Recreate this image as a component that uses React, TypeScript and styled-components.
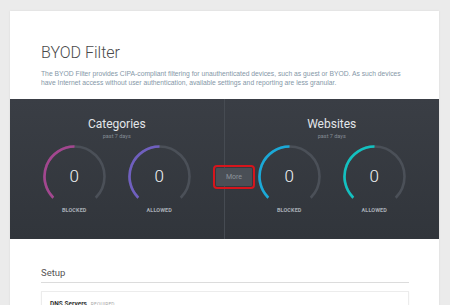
import styled, { createGlobalStyle } from "styled-components";

const GlobalStyle = createGlobalStyle`
  body {
    margin: 0;
    background: #ebebeb;
    font-family: Roboto, "Liberation Sans", sans-serif;
  }
`;

const Page = styled.div`
  padding: 11px 11px 0 10px;
  height: 305px;
  box-sizing: border-box;
  overflow: hidden;
`;

const Card = styled.div`
  background: #fff;
  box-shadow: 0 0 2px rgba(0, 0, 0, 0.08);
  min-height: 320px;
`;

const Header = styled.div`
  padding: 32px 30px 11px 31px;
`;

const Title = styled.h1`
  margin: 0;
  font-size: 16px;
  line-height: 19px;
  font-weight: 300;
  color: #4a4a4a;
`;

const Description = styled.p`
  margin: 7px 0 0;
  font-family: "Liberation Sans", Arial, sans-serif;
  font-size: 6.75px;
  line-height: 9.3px;
  color: #8597a7;
`;

const StatsPanel = styled.div`
  position: relative;
  display: grid;
  grid-template-columns: 1fr 1fr;
  height: 140px;
  background: linear-gradient(#3a3e45, #31353b);
`;

const StatGroup = styled.div<{ $divider?: boolean }>`
  display: flex;
  flex-direction: column;
  align-items: center;
  padding-top: 18px;
  border-right: ${(p) => (p.$divider ? "1px solid #464b52" : "none")};
`;

const GroupTitle = styled.div`
  font-size: 12px;
  line-height: 14px;
  color: #e3e6ea;
`;

const GroupSub = styled.div`
  margin-top: 1px;
  font-size: 5.5px;
  line-height: 8px;
  color: #858c95;
`;

const Gauges = styled.div`
  display: flex;
  gap: 22px;
  margin-top: 5px;
`;

const GaugeBox = styled.div`
  display: flex;
  flex-direction: column;
  align-items: center;
  width: 63px;
`;

const Dial = styled.div`
  position: relative;
  width: 63px;
  height: 63px;
`;

const DialValue = styled.span`
  position: absolute;
  inset: 0;
  display: flex;
  align-items: center;
  justify-content: center;
  font-size: 17px;
  font-weight: 300;
  color: #f2f4f6;
`;

const GaugeLabel = styled.div`
  margin-top: -1px;
  font-size: 5.5px;
  font-weight: 700;
  letter-spacing: 0.1px;
  color: #a7aeb6;
`;

const MoreButton = styled.button`
  position: absolute;
  left: 206px;
  top: 69px;
  width: 36px;
  height: 18px;
  padding: 0;
  border: 0;
  border-radius: 1px;
  background: #4a4f56;
  color: #8d949c;
  font-family: Roboto, sans-serif;
  font-size: 7px;
  outline: 2px solid #d6151c;
  outline-offset: 1px;
`;

const Setup = styled.div`
  padding: 28px 30px 0 31px;
`;

const SectionTitle = styled.h2`
  margin: 0;
  padding-bottom: 3px;
  font-size: 9.5px;
  line-height: 12px;
  font-weight: 400;
  color: #555;
  border-bottom: 1px solid #dcdcdc;
`;

const SetupCard = styled.div`
  margin-top: 8px;
  padding: 5px 8px;
  border: 1px solid #ececec;
  box-shadow: 0 1px 2px rgba(0, 0, 0, 0.04);
  height: 30px;
  line-height: 8px;
`;

const SetupName = styled.span`
  font-size: 6.5px;
  font-weight: 700;
  color: #333;
`;

const Badge = styled.span`
  margin-left: 4px;
  font-size: 4.8px;
  letter-spacing: 0.2px;
  color: #a8a8a8;
`;

function Gauge({ value, label, color }: { value: number; label: string; color: string }) {
  const c = 31.5;
  const r = 30;
  const a = r * Math.SQRT1_2;
  const start = `${c - a} ${c + a}`;
  return (
    <GaugeBox>
      <Dial>
        <svg width="63" height="63" viewBox="0 0 63 63">
          <path d={`M ${start} A ${r} ${r} 0 1 1 ${c + a} ${c + a}`} fill="none" stroke="#4b5058" strokeWidth="2.6" />
          <path d={`M ${start} A ${r} ${r} 0 0 1 ${c} ${c - r}`} fill="none" stroke={color} strokeWidth="2.6" />
        </svg>
        <DialValue>{value}</DialValue>
      </Dial>
      <GaugeLabel>{label}</GaugeLabel>
    </GaugeBox>
  );
}

export default function App() {
  return (
    <Page>
      <GlobalStyle />
      <Card>
        <Header>
          <Title>BYOD Filter</Title>
          <Description>
            The BYOD Filter provides CIPA-compliant filtering for unauthenticated devices, such as guest or BYOD. As such devices
            have Internet access without user authentication, available settings and reporting are less granular.
          </Description>
        </Header>
        <StatsPanel>
          <StatGroup $divider>
            <GroupTitle>Categories</GroupTitle>
            <GroupSub>past 7 days</GroupSub>
            <Gauges>
              <Gauge value={0} label="BLOCKED" color="#a3468f" />
              <Gauge value={0} label="ALLOWED" color="#6f5fbf" />
            </Gauges>
          </StatGroup>
          <StatGroup>
            <GroupTitle>Websites</GroupTitle>
            <GroupSub>past 7 days</GroupSub>
            <Gauges>
              <Gauge value={0} label="BLOCKED" color="#1aa9d8" />
              <Gauge value={0} label="ALLOWED" color="#12c1c0" />
            </Gauges>
          </StatGroup>
          <MoreButton>More</MoreButton>
        </StatsPanel>
        <Setup>
          <SectionTitle>Setup</SectionTitle>
          <SetupCard>
            <SetupName>DNS Servers</SetupName>
            <Badge>REQUIRED</Badge>
          </SetupCard>
        </Setup>
      </Card>
    </Page>
  );
}
